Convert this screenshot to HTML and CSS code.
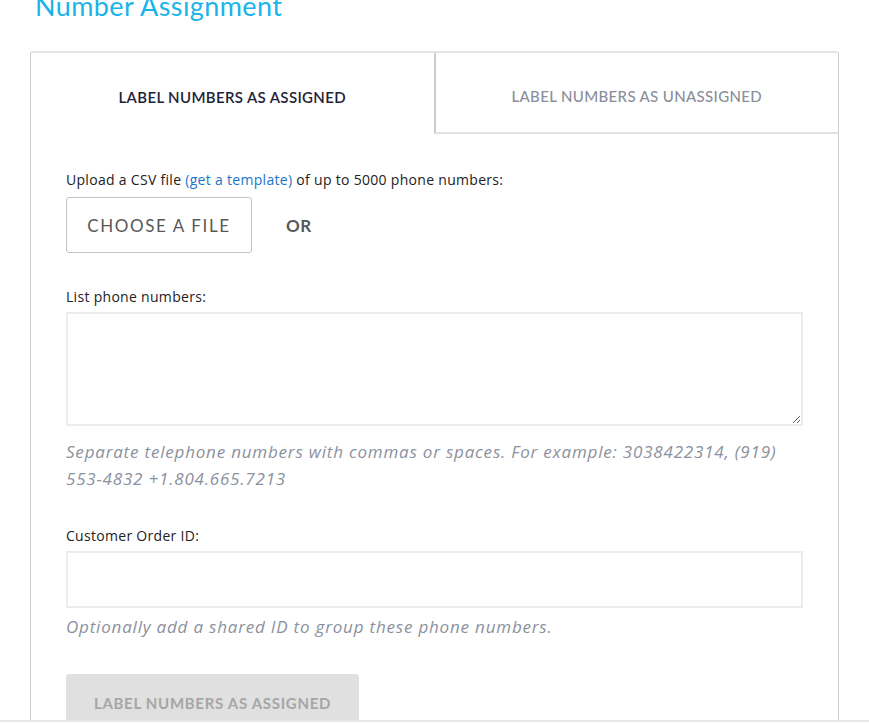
FILE: index.html
```html
<!DOCTYPE html>
<html>
<head>
<meta charset="utf-8">
<link rel="stylesheet" href="styles.css">
</head>
<body>
<h1 class="title">Number Assignment</h1>
<div class="card">
  <div class="tabs">
    <div class="tab tab-active">LABEL NUMBERS AS ASSIGNED</div>
    <div class="tab tab-inactive">LABEL NUMBERS AS UNASSIGNED</div>
  </div>
  <div class="body">
    <p class="label">Upload a CSV file <a class="link" href="#">(get a template)</a> of up to 5000 phone numbers:</p>
    <div class="file-row">
      <button class="file-btn">CHOOSE A FILE</button>
      <span class="or">OR</span>
    </div>
    <p class="label label-list">List phone numbers:</p>
    <textarea class="textarea"></textarea>
    <p class="help">Separate telephone numbers with commas or spaces. For example: 3038422314, (919) 553-4832 +1.804.665.7213</p>
    <p class="label label-order">Customer Order ID:</p>
    <input class="input" type="text">
    <p class="help help-order">Optionally add a shared ID to group these phone numbers.</p>
    <button class="submit">LABEL NUMBERS AS ASSIGNED</button>
  </div>
</div>
<div class="footer"></div>
</body>
</html>
```
FILE: styles.css
```css
* { box-sizing: border-box; }
html, body { margin: 0; padding: 0; background: #fff; overflow: hidden; }
body {
  font-family: Lato, "Open Sans", "Liberation Sans", sans-serif;
  color: #222;
  padding: 0 30px 0 30px;
  height: 723px;
}
.title {
  margin: -12px 0 0 5px;
  font-size: 27px;
  font-weight: 400;
  color: #1ab4e9;
  line-height: 36px;
  height: 63px;
  letter-spacing: 0.4px;
}
.card {
  width: 809px;
  border: 1px solid #cfcfcf;
  border-top: 2px solid #e4e4e4;
  border-bottom: none;
  border-radius: 3px 3px 0 0;
  height: 700px;
}
.tabs {
  display: flex;
  height: 81px;
}
.tab {
  flex: 1;
  display: flex;
  align-items: center;
  justify-content: center;
  font-size: 15px;
  letter-spacing: 0.35px;
  padding-top: 6px;
}
.tab-active {
  color: #1e2238;
  font-weight: 600;
}
.tab-inactive {
  color: #8a8e9a;
  font-weight: 500;
  border-left: 2px solid #cdcdcd;
  border-bottom: 2px solid #e2e2e2;
}
.body {
  padding: 36px 35px 0 35px;
}
.label {
  margin: 0;
  font-family: "Open Sans", Lato, sans-serif;
  font-size: 14px;
  line-height: 20px;
  color: #222;
  letter-spacing: 0.3px;
}
.link { color: #1a75c9; text-decoration: none; }
.file-row {
  display: flex;
  align-items: center;
  margin-top: 7px;
}
.file-btn {
  width: 186px;
  height: 56px;
  border: 1px solid #c3c3c3;
  border-radius: 3px;
  background: #fff;
  font-family: inherit;
  font-size: 17px;
  letter-spacing: 1.6px;
  color: #585858;
  padding: 0;
}
.or {
  margin-left: 34px;
  font-size: 17px;
  font-weight: 700;
  color: #585858;
  letter-spacing: 0.5px;
}
.label-list { margin-top: 34px; }
.textarea {
  display: block;
  width: 737px;
  height: 114px;
  margin-top: 5px;
  border: 2px solid #ececec;
  border-radius: 0;
  resize: vertical;
  font-family: inherit;
}
.help {
  margin: 12px 0 0 0;
  font-family: "Open Sans", Lato, sans-serif;
  font-size: 17px;
  line-height: 27px;
  font-style: italic;
  color: #8b919e;
  width: 737px;
  letter-spacing: 0.8px;
}
.label-order { margin-top: 34px; }
.input {
  display: block;
  width: 737px;
  height: 57px;
  margin-top: 5px;
  border: 2px solid #ececec;
  border-radius: 0;
  font-family: inherit;
}
.help-order { margin-top: 5px; }
.submit {
  display: block;
  margin-top: 34px;
  width: 293px;
  height: 56px;
  border: none;
  border-radius: 3px 3px 0 0;
  background: #e0e0e0;
  color: #a6a6a6;
  font-family: inherit;
  font-size: 15px;
  font-weight: 700;
  letter-spacing: 0.7px;
  padding: 2px 0 0 0;
}
.footer {
  position: fixed;
  left: 0;
  right: 0;
  bottom: 0;
  height: 3px;
  background: #fff;
  border-top: 2px solid #e8e8e8;
}
```
